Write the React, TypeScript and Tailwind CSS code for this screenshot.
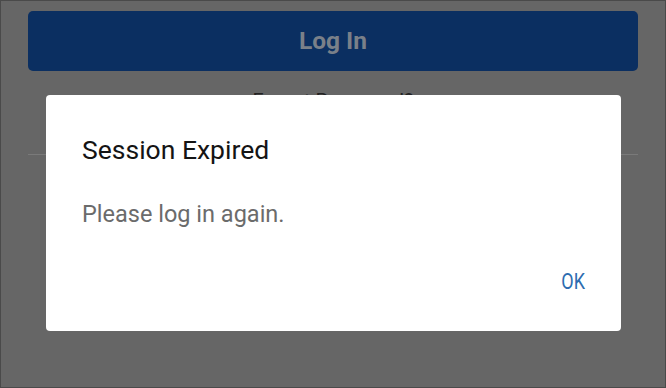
import React from "react";

export default function App() {
  return (
    <div
      className="relative w-[666px] h-[388px] overflow-hidden bg-[#666666] border border-[#4a4a4a]"
      style={{ fontFamily: "Roboto, 'Noto Sans', sans-serif" }}
    >
      <div className="flex flex-col px-[27px] pt-[10px]">
        <div className="flex h-[60px] items-center justify-center rounded-[5px] bg-[#0b2f61]">
          <span className="text-[24.5px] leading-[28px] font-bold text-[#7a8089]">Log In</span>
        </div>
        <div className="mt-[18px] flex justify-center">
          <span className="text-[20px] leading-[24px] text-[#222]">Forgot Password?</span>
        </div>
        <div className="mt-[41px] h-px bg-[#7a7a7a]" />
      </div>

      <div className="absolute left-[45px] top-[94px] w-[575px] h-[236px] rounded-[4px] bg-white flex flex-col pl-[36px] pr-[36px] pt-[39px]">
        <div className="text-[26.5px] leading-[32px] text-[#141414]">Session Expired</div>
        <div className="mt-[34px] text-[23.5px] leading-[28px] text-[#6b6b6b]">Please log in again.</div>
        <div className="mt-[42px] flex justify-end">
          <span className="inline-block scale-y-[1.2] text-[18px] leading-[24px] text-[#2c6cb0]">OK</span>
        </div>
      </div>
    </div>
  );
}
